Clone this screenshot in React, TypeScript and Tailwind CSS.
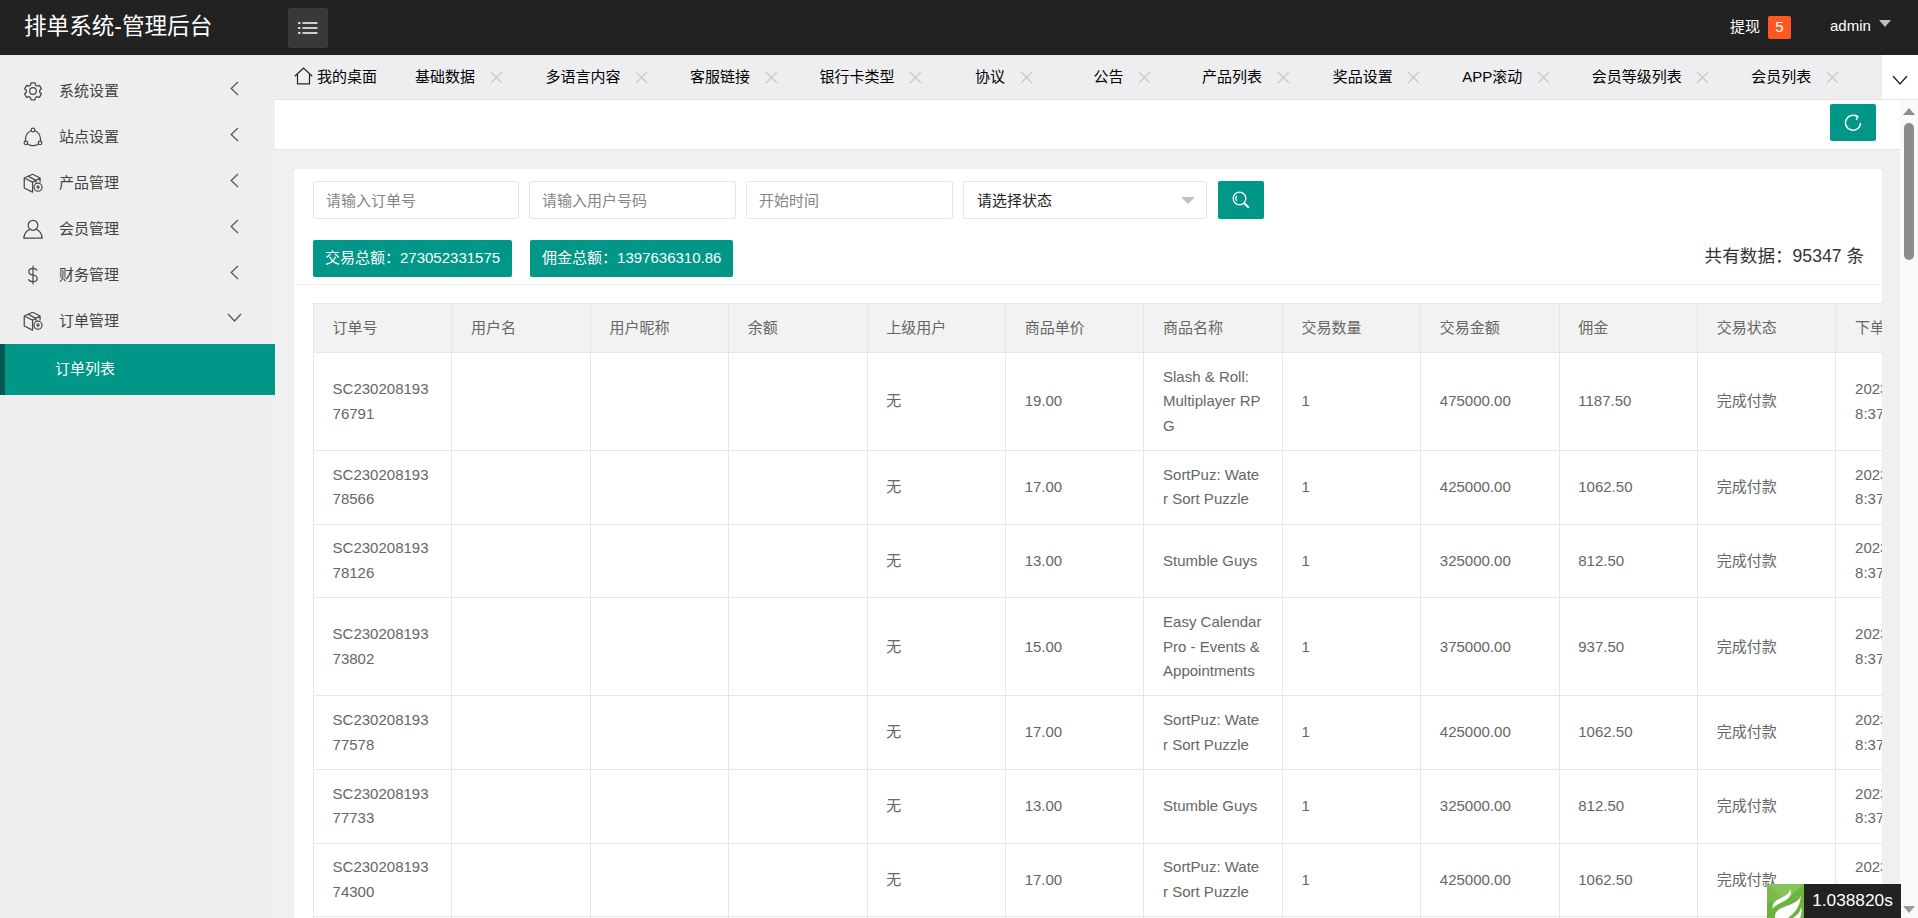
import React from "react";

const Gear = () => (
  <svg width="20" height="20" viewBox="0 0 24 24" fill="none" stroke="#4a4a4a" strokeWidth="1.5" strokeLinejoin="round">
    <path d="M9.600 2.200h4.800l.7 2.900 1.700 1 2.900-.9 2.400 4.200-2.200 2 .1 1-.1 1 2.200 2-2.400 4.200-2.900-.9-1.700 1-.7 2.900H9.600l-.7-2.900-1.700-1-2.900.9-2.400-4.200 2.200-2-.1-1 .1-1-2.200-2 2.400-4.200 2.900.9 1.700-1z" />
    <circle cx="12" cy="12" r="4" />
  </svg>
);
const Nodes = () => (
  <svg width="20" height="20" viewBox="0 0 24 24" fill="none" stroke="#4a4a4a" strokeWidth="1.5">
    <circle cx="12" cy="3.500" r="2.200" />
    <circle cx="3.500" cy="19" r="2.200" />
    <circle cx="20.500" cy="19" r="2.200" />
    <path d="M9.800 4.500C5.500 6 2.800 10.500 2.800 16.800M14.200 4.500c4.300 1.500 7 6 7 12.300M5.500 20.300c4 2.600 9 2.600 13 0" />
  </svg>
);
const Box = () => (
  <svg width="20" height="20" viewBox="0 0 24 24" fill="none" stroke="#4a4a4a" strokeWidth="1.5" strokeLinejoin="round">
    <path d="M11.500 1.500l9 4.500v5M11.500 1.500l-10 4.500v12l10 5V11L1.500 6M11.500 11l9-5" />
    <path d="M6 3.800l9.500 5v3" />
    <circle cx="18" cy="17" r="4.800" />
    <path d="M18 14.500v5M15.800 17h4.400" />
  </svg>
);
const User = () => (
  <svg width="20" height="20" viewBox="0 0 24 24" fill="none" stroke="#4a4a4a" strokeWidth="1.5">
    <ellipse cx="12" cy="7.500" rx="5.800" ry="6" />
    <path d="M8 12.500C4.500 14 1.500 17.500 1 22.800h22c-.5-5.300-3.500-8.800-7-10.300" />
  </svg>
);
const Dollar = () => (
  <svg width="20" height="20" viewBox="0 0 24 24" fill="none" stroke="#4a4a4a" strokeWidth="1.5">
    <path d="M12 1v22M17 6.500C16 4.500 14 4 12 4 9 4 7 5.500 7 8c0 2.500 2 3.500 5 4s5 1.700 5 4.200S15 20 12 20c-2.500 0-4.500-.8-5.500-3" />
  </svg>
);
const Left = () => (
  <svg width="9" height="15" viewBox="0 0 9 15" fill="none" stroke="#555" strokeWidth="1.2">
    <path d="M8 1L1.200 7.500 8 14" />
  </svg>
);
const Down = () => (
  <svg width="15" height="10" viewBox="0 0 15 10" fill="none" stroke="#555" strokeWidth="1.2">
    <path d="M1 1l6.500 7L14 1" />
  </svg>
);
const Close = () => (
  <svg width="13" height="13" viewBox="0 0 13 13" fill="none" stroke="#c8c8c8" strokeWidth="1.200" className="ml-[14.5px] shrink-0">
    <path d="M1 1l11 11M12 1L1 12" />
  </svg>
);

const nav = [
  { label: "系统设置", icon: <Gear /> },
  { label: "站点设置", icon: <Nodes /> },
  { label: "产品管理", icon: <Box /> },
  { label: "会员管理", icon: <User /> },
  { label: "财务管理", icon: <Dollar /> },
];

const tabs = [
  { t: "基础数据", c: "ml-[38px]" },
  { t: "多语言内容", c: "ml-[43px]" },
  { t: "客服链接", c: "ml-[42px]" },
  { t: "银行卡类型", c: "ml-[42px]" },
  { t: "协议", c: "ml-[53px]" },
  { t: "公告", c: "ml-[61px]" },
  { t: "产品列表", c: "ml-[51px]" },
  { t: "奖品设置", c: "ml-[43px]" },
  { t: "APP滚动", c: "ml-[42px]" },
  { t: "会员等级列表", c: "ml-[42px]" },
  { t: "会员列表", c: "ml-[42px]" },
];

const heads = ["订单号", "用户名", "用户昵称", "余额", "上级用户", "商品单价", "商品名称", "交易数量", "交易金额", "佣金", "交易状态", "下单时间"];

const rows = [
  ["SC23020819376791", "19.00", "Slash & Roll: Multiplayer RPG", "475000.00", "1187.50"],
  ["SC23020819378566", "17.00", "SortPuz: Water Sort Puzzle", "425000.00", "1062.50"],
  ["SC23020819378126", "13.00", "Stumble Guys", "325000.00", "812.50"],
  ["SC23020819373802", "15.00", "Easy Calendar Pro - Events & Appointments", "375000.00", "937.50"],
  ["SC23020819377578", "17.00", "SortPuz: Water Sort Puzzle", "425000.00", "1062.50"],
  ["SC23020819377733", "13.00", "Stumble Guys", "325000.00", "812.50"],
  ["SC23020819374300", "17.00", "SortPuz: Water Sort Puzzle", "425000.00", "1062.50"],
  ["SC23020819374301", "17.00", "SortPuz: Water Sort Puzzle", "425000.00", "1062.50"],
];

const td = "border border-[#e6e6e6] pl-[18.6px] pr-[20px] py-[11.7px] leading-[24.6px] break-all align-middle";

export default function App() {
  return (
    <div className="relative flex h-screen flex-col overflow-hidden bg-white font-['Liberation_Sans','Noto_Sans_CJK_SC',sans-serif] text-[15px] text-[#666]">
      <header className="flex h-[55px] shrink-0 items-center bg-[#222222] text-white">
        <div className="w-[288px] pl-[24px] text-[22.600px] leading-none">排单系统-管理后台</div>
        <button className="flex h-[40px] w-[40px] items-center justify-center rounded-[3px] bg-[#393939]">
          <svg width="20" height="14" viewBox="0 0 20 14" fill="none" stroke="#fff" strokeWidth="1.500">
            <path d="M0 2h2.500M4.500 2H19.500M0 7h2.500M4.500 7H19.500M0 12h2.500M4.500 12H19.500" />
          </svg>
        </button>
        <div className="ml-auto flex items-center">
          <span className="w-[38px]">提现</span>
          <span className="flex h-[23px] w-[23px] items-center justify-center rounded-[2px] bg-[#ff5722]">5</span>
          <span className="ml-[39px] w-[49px] -translate-y-[1px]">admin</span>
          <span className="mr-[27px] mb-[8px] h-0 w-0 border-x-[6.500px] border-t-[7px] border-x-transparent border-t-[#bdbdbd]" />
        </div>
      </header>

      <div className="flex min-h-0 flex-1">
        <aside className="w-[275px] shrink-0 bg-[#eeeeee] pt-[13px] text-[#444]">
          {nav.map((n) => (
            <div key={n.label} className="flex h-[46px] items-center">
              <span className="ml-[23px] flex w-[36px]">{n.icon}</span>
              <span className="w-[171px]">{n.label}</span>
              <span className="-translate-y-[3px]">
                <Left />
              </span>
            </div>
          ))}
          <div className="flex h-[46px] items-center">
            <span className="ml-[23px] flex w-[36px]">
              <Box />
            </span>
            <span className="w-[168px]">订单管理</span>
            <span className="-translate-y-[3px]">
              <Down />
            </span>
          </div>
          <div className="flex h-[51px] items-center border-l-[5px] border-[#00594f] bg-[#009688] pl-[50px] text-white">订单列表</div>
        </aside>

        <main className="flex min-w-0 flex-1 flex-col">
          <div className="flex h-[45px] shrink-0 border-b border-[#e4e4e4] bg-[#eeeef0] text-black">
            <div className="flex min-w-0 flex-1 items-center pl-[19px]">
              <svg width="19" height="18" viewBox="0 0 19 18" fill="none" stroke="#222" strokeWidth="1.200" className="mr-[4px] -translate-y-[1px]">
                <path d="M.8 9.300L9.500 1l8.700 8.300M3.500 7.500V16.800h12V7.500" />
              </svg>
              <span>我的桌面</span>
              {tabs.map((t) => (
                <div key={t.t} className={`flex shrink-0 items-center ${t.c}`}>
                  <span>{t.t}</span>
                  <Close />
                </div>
              ))}
            </div>
            <div className="flex w-[36px] items-center justify-center bg-white">
              <svg width="16" height="10" viewBox="0 0 16 10" fill="none" stroke="#222" strokeWidth="1.300" className="translate-y-[3px]">
                <path d="M1 1l7 8 7-8" />
              </svg>
            </div>
          </div>

          <div className="flex min-h-0 flex-1">
            <div className="flex min-w-0 flex-1 flex-col bg-[#f0f0f0]">
              <div className="flex h-[50px] shrink-0 justify-end border-b border-[#e4e4e4] bg-white pt-[4px] pr-[24px]">
                <button className="flex h-[37px] w-[46px] items-center justify-center rounded-[2px] bg-[#009688]">
                  <svg width="18" height="18" viewBox="0 0 18 18" fill="none" stroke="#fff" strokeWidth="1.500">
                    <path d="M13.500 2.800A7.500 7.500 0 1 0 16.500 9" />
                    <path d="M10.500 1l3.300 1.700-1.500 3.300" />
                  </svg>
                </button>
              </div>
              <div className="flex min-h-0 flex-1 flex-col pt-[19px] pr-[18px] pl-[19px]">
                <div className="min-h-0 flex-1 overflow-hidden rounded-t-[3px] bg-white">
                  <div className="border-b border-[#f2f2f2]">
                    <div className="flex items-center pt-[12px] pl-[19px]">
                      <input readOnly placeholder="请输入订单号" className="h-[38px] w-[206px] rounded-[2px] border border-[#e6e6e6] pl-[12px] outline-none placeholder:text-[#858585]" />
                      <input readOnly placeholder="请输入用户号码" className="ml-[10px] h-[38px] w-[207px] rounded-[2px] border border-[#e6e6e6] pl-[12px] outline-none placeholder:text-[#858585]" />
                      <input readOnly placeholder="开始时间" className="ml-[10px] h-[38px] w-[207px] rounded-[2px] border border-[#e6e6e6] pl-[12px] outline-none placeholder:text-[#858585]" />
                      <div className="ml-[10px] flex h-[38px] w-[244px] items-center justify-between rounded-[2px] border border-[#e6e6e6] pr-[11px] pl-[13px] text-[#222]">
                        <span className="translate-y-[1px]">请选择状态</span>
                        <span className="h-0 w-0 border-x-[7px] border-t-[7px] border-x-transparent border-t-[#c2c2c2]" />
                      </div>
                      <button className="ml-[11px] flex h-[38px] w-[46px] items-center justify-center rounded-[2px] bg-[#009688]">
                        <svg width="18" height="18" viewBox="0 0 18 18" fill="none" stroke="#fff" strokeWidth="1.300">
                          <circle cx="7.500" cy="7.500" r="6.300" />
                          <path d="M4.800 10c-1.200-1.500-1.200-3.500 0-5" />
                          <path d="M12 12l4.800 4.800" strokeWidth="2" />
                        </svg>
                      </button>
                    </div>
                    <div className="mt-[21px] mb-[7px] flex items-center pr-[18px] pl-[19px]">
                      <div className="flex h-[37px] items-center rounded-[2px] bg-[#009688] px-[12px] text-white">交易总额：273052331575</div>
                      <div className="ml-[18px] flex h-[37px] items-center rounded-[2px] bg-[#009688] px-[12px] text-white">佣金总额：1397636310.86</div>
                      <div className="ml-auto -translate-y-[2px] text-[17.600px] text-[#333]">共有数据：95347 条</div>
                    </div>
                  </div>
                  <div className="pt-[18px] pl-[19px]">
                    <table className="w-[1662px] table-fixed border-collapse">
                      <thead>
                        <tr className="bg-[#f2f2f2]">
                          {heads.map((h) => (
                            <th key={h} className="h-[49px] border border-[#e6e6e6] pr-[10px] pl-[18.6px] text-left font-normal">
                              {h}
                            </th>
                          ))}
                        </tr>
                      </thead>
                      <tbody>
                        {rows.map((r) => (
                          <tr key={r[0]}>
                            <td className={td}>{r[0]}</td>
                            <td className={td} />
                            <td className={td} />
                            <td className={td} />
                            <td className={td}>无</td>
                            <td className={td}>{r[1]}</td>
                            <td className={td}>{r[2]}</td>
                            <td className={td}>1</td>
                            <td className={td}>{r[3]}</td>
                            <td className={td}>{r[4]}</td>
                            <td className={td}>完成付款</td>
                            <td className={td}>
                              <span className="block">2023-02-08 1</span>
                              <span className="block">8:37:21</span>
                            </td>
                          </tr>
                        ))}
                      </tbody>
                    </table>
                  </div>
                </div>
              </div>
            </div>

            <div className="flex w-[18px] shrink-0 flex-col items-center bg-[#f9f9f9] pt-[8px] pb-[5px]">
              <span className="h-0 w-0 border-x-[6px] border-b-[7px] border-x-transparent border-b-[#8c8c8c]" />
              <span className="mt-[8px] h-[137px] w-[10px] rounded-full bg-[#8c8c8c]" />
              <span className="mt-auto h-0 w-0 border-x-[6px] border-t-[7px] border-x-transparent border-t-[#9a9a9a]" />
            </div>
          </div>
        </main>
      </div>

      <div className="absolute right-[17px] bottom-0 flex h-[34px]">
        <div className="h-[34px] w-[37px] overflow-hidden">
          <svg width="37" height="34" viewBox="0 0 37 34">
            <rect width="37" height="34" fill="#6db33f" />
            <path d="M0 0h37L18.500 17z" fill="#86c45a" />
            <path d="M0 0v17l18.500-0z" fill="#7abb4c" />
            <path d="M23 5C23 11 15 13 10 16 7 18 5 21 5.500 25 8 21 14 19 19 16 23 13.500 25 10 23 5z" fill="#fff" />
            <path d="M34 11C33 17 25 20 17 23 11 25 7 29 8 34H21C27 29 33 24 34 11z" fill="#fff" />
            <path d="M34 22C34 28 30 31 26 34H33C35 30 35 26 34 22z" fill="#fff" />
          </svg>
        </div>
        <div className="flex w-[97px] items-center justify-center bg-[#222222] text-[17.300px] text-white">1.038820s</div>
      </div>
    </div>
  );
}
